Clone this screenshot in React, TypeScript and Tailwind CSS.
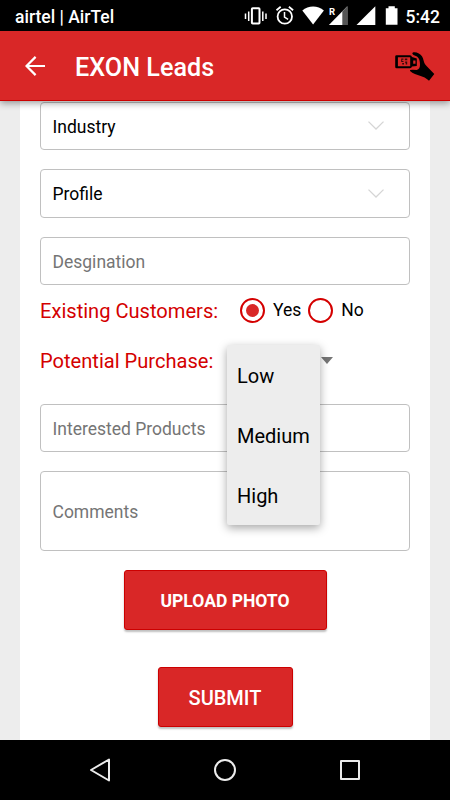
import type { ReactNode } from "react";

const purchaseOptions = ["Low", "Medium", "High"];

function StatusBar() {
  return (
    <div className="h-[31px] shrink-0 bg-black text-white flex items-center justify-between pl-[15px] pr-[10px] text-[17.5px] font-medium">
      <span className="pt-[3px]">airtel | AirTel</span>
      <div className="flex items-center">
        <svg className="w-[160px] h-[31px] mr-[5px]" viewBox="240.5 0 160 31" fill="none">
          {/* Vibrate */}
          <g stroke="#fff">
            <rect x="251.4" y="8.2" width="7.6" height="15.4" rx="0.8" strokeWidth="2" />
            <path d="M248.2 11.5v9.5M262.3 11.5v9.5" strokeWidth="1.5" />
            <path d="M245 13.5v5.5M265.5 13.5v5.5" strokeWidth="1.5" />
          </g>
          {/* Alarm */}
          <g stroke="#fff">
            <circle cx="284.3" cy="16.5" r="7.2" strokeWidth="1.8" />
            <path d="M284 12v5l3.6 2.4" strokeWidth="1.5" />
            <path d="M276 10.3l4.2-3.5M292.6 10.3l-4.2-3.5" strokeWidth="1.8" />
          </g>
          {/* Wifi */}
          <path d="M301.8 10.6c6-5.4 15.6-5.4 21.6 0L312.6 24.6z" fill="#fff" />
          {/* Roaming signal */}
          <path d="M346.8 6.3V25H328.4z" fill="#fff" />
          <path d="M341.8 11.4l5-5.1V25h-5z" fill="#555" />
          <text x="328.6" y="15.3" fontSize="9.5" fontWeight="700" fill="#fff">R</text>
          {/* Signal */}
          <path d="M374.8 6.3V25H356z" fill="#fff" />
          {/* Battery */}
          <path d="M385.3 8.3h2.7V6.2h6.3v2.1h2.7V24.7h-11.7z" fill="#fff" />
        </svg>
        <span className="pt-[3px]">5:42</span>
      </div>
    </div>
  );
}

function AppBar() {
  return (
    <header className="relative z-10 h-[70px] shrink-0 bg-[#d92727] border-b border-[#cc0000] shadow-[0_2px_7px_rgba(0,0,0,0.4)] flex items-center pl-[25px] pr-[15px]">
      <svg className="w-5 h-5" viewBox="0 0 20 20" fill="none" stroke="#fff" strokeWidth="2.2">
        <path d="M20 10H2M10.6 0.9L1.5 10l9.1 9.1" />
      </svg>
      <h1 className="ml-[30px] pt-1 flex-1 text-white text-[25.2px] font-medium">EXON Leads</h1>
      {/* Hand holding a badge */}
      <svg className="w-10 h-[30px]" viewBox="0 0 40 30" fill="#000">
        <path fillRule="evenodd" d="M1.5 4.2H15Q16.5 4.2 17 6L21.8 7.5V15L17 15.5Q16.5 17.3 15 17.3H1.5Q0.2 17.3 0.2 16V5.5Q0.2 4.2 1.5 4.2zM2.9 6.2V15.3H15.2V6.2zM18.2 9.6V12.8H20.5V9.6z" />
        <path d="M6.2 7.5h2.3v1.2H7.2v1.2h1.3v1H6.200zM9.800 7.500h2.500v1.800H9.800zM7.200 12h1.800v1.500H7.200zM10.200 10.600h2v2.800h-1.500v-1.400h-0.500z" opacity="0.75" />
        <path d="M17.8 1.4C20 0.9 22 1.4 23.8 2.6C26.5 4 28 6.5 28.6 9.5C29 12 30.5 14 32 15.6L39.3 23L34 29.8C32 28 30 26.6 28.3 26C25 24.6 20.5 23.6 17.3 21.8Q14.3 20 15.2 19.1Q16 18.3 21.7 18.9C24 18.4 25.1 16.5 25 13.5C24.9 10 24.3 7.4 22 5.6L18.5 4.1Q16.4 2.7 17.8 1.4z" />
      </svg>
    </header>
  );
}

function Field({ label, select = false }: { label: string; select?: boolean }) {
  return (
    <div className="h-[48.5px] border border-[#c0c0c0] rounded-[4px] pl-[11.5px] pr-[25px] flex items-center justify-between text-[17.5px]">
      <span className={select ? "text-black pt-[2px]" : "text-[#757575] pt-[2px]"}>{label}</span>
      {select && (
        <svg className="w-4 h-[9px]" viewBox="0 0 16 9" fill="none" stroke="#d5d5d5" strokeWidth="1.3">
          <path d="M0.5 0.6L8 8l7.5-7.4" />
        </svg>
      )}
    </div>
  );
}

function Radio({ label, checked = false }: { label: string; checked?: boolean }) {
  return (
    <label className="flex items-center text-[17.5px] text-black">
      <span className="w-[25px] h-[25px] mr-2 rounded-full border-2 border-[#d40000] flex items-center justify-center">
        {checked && <span className="w-[13px] h-[13px] rounded-full bg-[#d92727]" />}
      </span>
      <span className="pt-px">{label}</span>
    </label>
  );
}

function RedButton({ className, children }: { className: string; children: ReactNode }) {
  return (
    <button className={`block mx-auto h-[60px] bg-[#d92727] border border-[#cc0000] rounded-[3px] text-white shadow-[0_2px_2px_rgba(0,0,0,0.25)] ${className}`}>
      {children}
    </button>
  );
}

function NavBar() {
  return (
    <nav className="h-[60px] shrink-0 bg-black flex items-center justify-between pl-[88px] pr-[90px]">
      <svg className="w-[22px] h-6" viewBox="0 0 22 24" fill="none" stroke="#ececec" strokeWidth="2" strokeLinejoin="round">
        <path d="M21 1.5v21L3 12z" />
      </svg>
      <span className="w-[22px] h-[22px] rounded-full border-2 border-[#ececec]" />
      <span className="w-5 h-5 rounded-[1px] border-2 border-[#ececec]" />
    </nav>
  );
}

export default function App() {
  return (
    <div className="w-[450px] h-[800px] overflow-hidden flex flex-col bg-[#ededed] font-[Roboto,sans-serif]">
      <StatusBar />
      <AppBar />

      <main className="flex-1 min-h-0 mx-5 px-5 bg-white">
        <div className="flex flex-col gap-[19px] pt-[0.6px]">
          <Field label="Industry" select />
          <Field label="Profile" select />
          <Field label="Desgination" />
        </div>

        <div className="h-[50px] flex items-center">
          <span className="w-[200px] pt-px text-[20.1px] text-[#d40000]">Existing Customers:</span>
          <Radio label="Yes" checked />
          <div className="w-[7px]" />
          <Radio label="No" />
        </div>

        <div className="relative h-[50px] flex items-center">
          <span className="w-[281px] pt-px text-[20.1px] text-[#d40000]">Potential Purchase:</span>
          <svg className="w-3 h-[7px]" viewBox="0 0 12 7" fill="#757575">
            <path d="M0 0h12L6 7z" />
          </svg>
          <ul className="absolute z-10 left-[187px] top-[9.5px] w-[93px] bg-[#ededed] rounded-[2px] shadow-[0_3px_10px_rgba(0,0,0,0.35)]">
            {purchaseOptions.map((option) => (
              <li key={option} className="h-[60px] pl-[10px] pt-[2px] flex items-center text-xl text-black">
                {option}
              </li>
            ))}
          </ul>
        </div>

        <div className="pt-[18.6px]">
          <Field label="Interested Products" />
        </div>
        <div className="mt-[18.6px] h-20 border border-[#c0c0c0] rounded-[4px] pl-[11.5px] pt-[2px] flex items-center text-[17.5px] text-[#757575]">
          Comments
        </div>

        <RedButton className="mt-[19px] w-[203px] pt-[2px] text-[17.5px] font-bold">UPLOAD PHOTO</RedButton>
        <RedButton className="mt-[37.5px] w-[135px] pt-[2px] text-xl font-medium">SUBMIT</RedButton>
      </main>

      <NavBar />
    </div>
  );
}
